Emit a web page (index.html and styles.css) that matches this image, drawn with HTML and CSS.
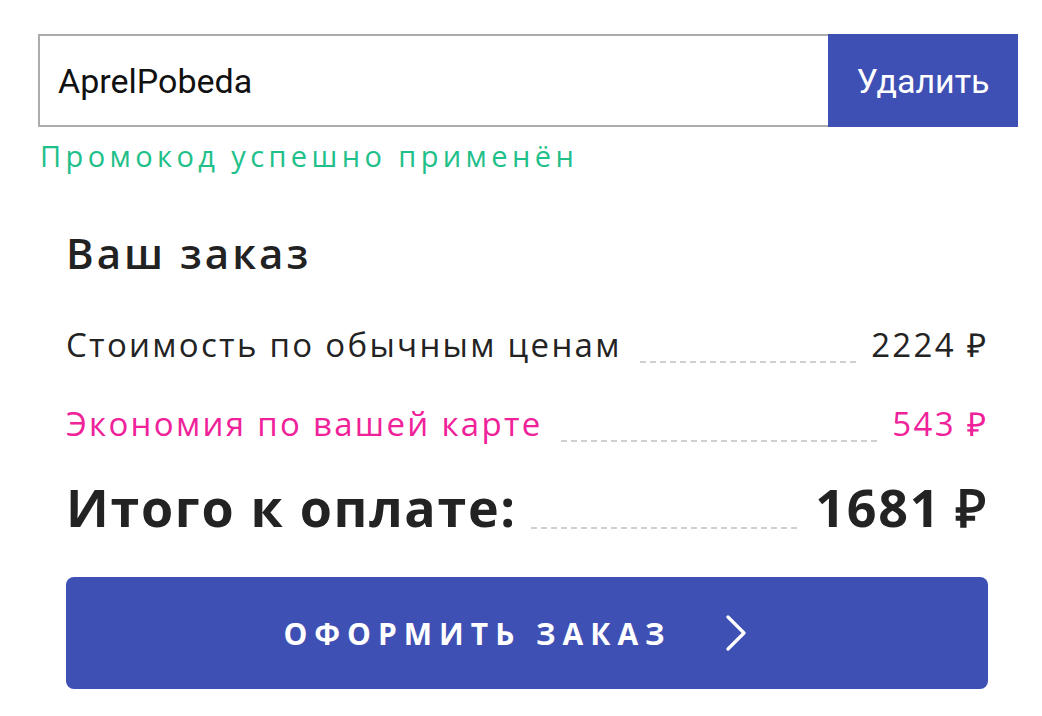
FILE: index.html
```html
<!DOCTYPE html>
<html lang="ru">
<head>
    <meta charset="UTF-8">
    <meta name="viewport" content="width=device-width, initial-scale=1.0">
    <title>Ваш заказ</title>
    <link rel="stylesheet" href="styles.css">
</head>
<body>
    <div class="checkout">
        <div class="promo">
            <input type="text" class="promo-input" value="AprelPobeda">
            <button class="promo-remove">Удалить</button>
        </div>
        <p class="promo-ok">Промокод успешно применён</p>

        <div class="order">
            <h2 class="order-title">Ваш заказ</h2>

            <div class="row">
                <span class="row-label">Стоимость по обычным ценам</span>
                <span class="row-dots"></span>
                <span class="row-value">2224 ₽</span>
            </div>
            <div class="row row-discount">
                <span class="row-label">Экономия по вашей карте</span>
                <span class="row-dots"></span>
                <span class="row-value">543 ₽</span>
            </div>
            <div class="row row-total">
                <span class="row-label">Итого к оплате:</span>
                <span class="row-dots"></span>
                <span class="row-value">1681 ₽</span>
            </div>

            <button class="submit">
                <span>ОФОРМИТЬ ЗАКАЗ</span>
                <svg class="submit-arrow" width="22" height="36" viewBox="0 0 22 36">
                    <path d="M3 2 L19 18 L3 34" fill="none" stroke="#fff" stroke-width="3.2" stroke-linecap="round" stroke-linejoin="round"/>
                </svg>
            </button>
        </div>
    </div>
</body>
</html>
```

FILE: styles.css
```css
body {
    margin: 0;
    background-color: #fff;
    font-family: 'Open Sans', sans-serif;
    color: #232323;
}
.checkout {
    padding: 34px 24px 0 38px;
}
.promo {
    display: flex;
    height: 93px;
}
.promo-input {
    flex: 1;
    box-sizing: border-box;
    height: 100%;
    margin: 0;
    padding: 0 18px;
    border: 2px solid #acacac;
    border-right: none;
    font-family: 'Roboto', sans-serif;
    font-size: 34px;
    color: #111;
    outline: none;
}
.promo-remove {
    width: 190px;
    height: 100%;
    margin: 0;
    border: none;
    background-color: #3f50b5;
    color: #fff;
    font-family: 'Roboto', sans-serif;
    font-size: 34px;
    cursor: pointer;
}
.promo-ok {
    margin: 9px 0 0 2px;
    font-size: 29px;
    line-height: 40px;
    letter-spacing: 4.4px;
    color: #1fc08a;
}
.order {
    padding: 0 30px 0 28px;
}
.order-title {
    margin: 52px 0 45px;
    font-size: 42px;
    line-height: 50px;
    font-weight: 600;
    letter-spacing: 3px;
    color: #222;
}
.row {
    display: flex;
    align-items: baseline;
    font-size: 33px;
    line-height: 44px;
    letter-spacing: 2.3px;
    margin-bottom: 35px;
}
.row-dots {
    flex: 1;
    align-self: flex-end;
    height: 2px;
    margin: 0 11px 4px 18px;
    background-image: linear-gradient(to right, #d0d0d0 60%, transparent 60%);
    background-size: 10px 2px;
}
.row-discount {
    color: #f0229a;
    margin-bottom: 31px;
}
.row-total {
    font-size: 52px;
    line-height: 60px;
    font-weight: 700;
    letter-spacing: 1.7px;
    margin-bottom: 40px;
}
.row-total .row-dots {
    margin: 0 15px 8px 14px;
}
.submit {
    display: flex;
    align-items: center;
    justify-content: center;
    gap: 53px;
    width: 100%;
    height: 112px;
    padding: 0 24px 0 0;
    border: none;
    border-radius: 8px;
    background-color: #3f50b5;
    color: #fff;
    font-family: 'Open Sans', sans-serif;
    font-size: 30px;
    font-weight: 700;
    letter-spacing: 7px;
    cursor: pointer;
}
```
